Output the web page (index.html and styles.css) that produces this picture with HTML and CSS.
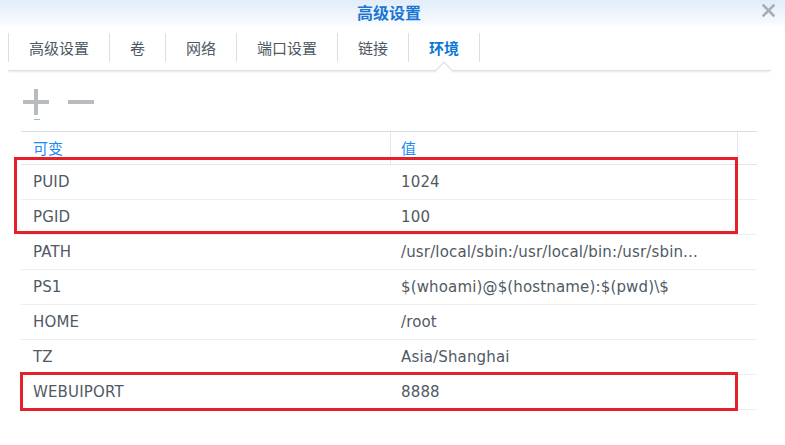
FILE: index.html
```html
<!DOCTYPE html>
<html lang="zh-CN">
<head>
<meta charset="utf-8">
<title>高级设置</title>
<link rel="stylesheet" href="styles.css">
</head>
<body>
<div class="window">
  <div class="titlebar">
    <span></span>
    <div class="title">高级设置</div>
    <div class="close">
      <svg width="13" height="13" viewBox="0 0 13 13"><path d="M1.5 1.5 L11.5 11.5 M11.5 1.5 L1.5 11.5" stroke="#a9adb2" stroke-width="2.6" stroke-linecap="square"/></svg>
    </div>
  </div>
  <div class="tabbar">
    <div class="tab">高级设置</div>
    <div class="tab">卷</div>
    <div class="tab">网络</div>
    <div class="tab">端口设置</div>
    <div class="tab">链接</div>
    <div class="tab active">环境</div>
  </div>
  <div class="toolbar">
    <div class="tool plus">
      <svg width="26" height="26" viewBox="0 0 26 26"><path d="M13 0 V26 M0 13 H26" stroke="#b8bcc1" stroke-width="4"/></svg>
      <span class="mark"></span>
    </div>
    <div class="tool">
      <svg width="26" height="26" viewBox="0 0 26 26"><path d="M0 13 H26" stroke="#b8bcc1" stroke-width="4"/></svg>
    </div>
  </div>
  <div class="grid">
    <div class="hcell c1">可变</div>
    <div class="hcell c2">值</div>
    <div class="hcell c3"></div>

    <div class="cell c1">PUID</div><div class="cell c2">1024</div><div class="cell c3"></div>
    <div class="cell c1">PGID</div><div class="cell c2">100</div><div class="cell c3"></div>
    <div class="cell c1">PATH</div><div class="cell c2">/usr/local/sbin:/usr/local/bin:/usr/sbin...</div><div class="cell c3"></div>
    <div class="cell c1">PS1</div><div class="cell c2">$(whoami)@$(hostname):$(pwd)\$</div><div class="cell c3"></div>
    <div class="cell c1">HOME</div><div class="cell c2">/root</div><div class="cell c3"></div>
    <div class="cell c1">TZ</div><div class="cell c2">Asia/Shanghai</div><div class="cell c3"></div>
    <div class="cell c1">WEBUIPORT</div><div class="cell c2">8888</div><div class="cell c3"></div>
  </div>
  <div class="highlight hl-1"></div>
  <div class="highlight hl-2"></div>
</div>
</body>
</html>
```
FILE: styles.css
```css
* { box-sizing: border-box; }
html, body { margin: 0; padding: 0; background: #ffffff; }
body {
  width: 785px;
  height: 445px;
  overflow: hidden;
  font-family: "DejaVu Sans", "Noto Sans CJK SC", sans-serif;
  color: #505a64;
}
.window { position: relative; width: 785px; height: 445px; }

.titlebar {
  height: 28px;
  display: grid;
  grid-template-columns: 1fr auto 1fr;
  align-items: start;
  padding-top: 2px;
  background: linear-gradient(#e1edfa 0%, #f4f9fe 75%, #ffffff 100%);
}
.title {
  font-family: "Noto Sans CJK SC", sans-serif;
  font-size: 16px;
  font-weight: 700;
  line-height: 20px;
  color: #1976d2;
  margin-right: 7px;
}
.close {
  justify-self: end;
  padding-right: 10px;
  padding-top: 2px;
  height: 16px;
}
.close svg { display: block; }

.tabbar {
  margin: 5px 14px 0 8px;
  height: 38px;
  display: flex;
  align-items: flex-start;
  border-bottom: 1px solid #dcdfe3;
  box-shadow: 0 2px 2px -1px rgba(0,0,0,0.10);
}
.tab {
  position: relative;
  height: 29px;
  padding: 0 20px;
  border-left: 1px solid #d7dfe8;
  font-family: "Noto Sans CJK SC", sans-serif;
  font-size: 15px;
  line-height: 29px;
  color: #4e5862;
}
.tab:last-child { border-right: 1px solid #d7dfe8; }
.tab.active { color: #0b78d6; font-weight: 700; }
.tab.active::after {
  content: "";
  position: absolute;
  left: 50%;
  bottom: -14px;
  width: 11px;
  height: 11px;
  margin-left: -6px;
  background: #ffffff;
  border-left: 1px solid #d9dcdf;
  border-top: 1px solid #d9dcdf;
  transform: rotate(45deg);
}

.toolbar {
  display: flex;
  gap: 19px;
  padding: 18px 0 0 23px;
  height: 60px;
}
.tool { position: relative; width: 26px; height: 26px; }
.tool svg { display: block; }
.mark {
  position: absolute;
  left: 11px;
  top: 30px;
  width: 6px;
  height: 1px;
  background: #8fcf8f;
}

.grid {
  margin-left: 21px;
  width: 736px;
  display: grid;
  grid-template-columns: 369px 347px 20px;
  border-top: 1px solid #d6dee6;
}
.hcell {
  height: 33px;
  border-bottom: 1px solid #e1e7ee;
  font-family: "Noto Sans CJK SC", sans-serif;
  font-size: 15px;
  line-height: 32px;
  color: #1a8af5;
}
.hcell.c2, .hcell.c3 { border-left: 1px solid #e1e7ee; }
.cell {
  height: 35px;
  border-bottom: 1px solid #eceef1;
  font-size: 15px;
  line-height: 34px;
  letter-spacing: 0.15px;
  color: #505a64;
  white-space: nowrap;
  overflow: hidden;
}
.c1 { padding-left: 12px; }
.c2 { padding-left: 11px; }
.hcell.c2 { padding-left: 10px; }

.highlight {
  position: absolute;
  border: 3px solid #e5202a;
}
.hl-1 { left: 14px; top: 157px; width: 724px; height: 77px; }
.hl-2 { left: 20px; top: 372px; width: 718px; height: 39px; }
```
